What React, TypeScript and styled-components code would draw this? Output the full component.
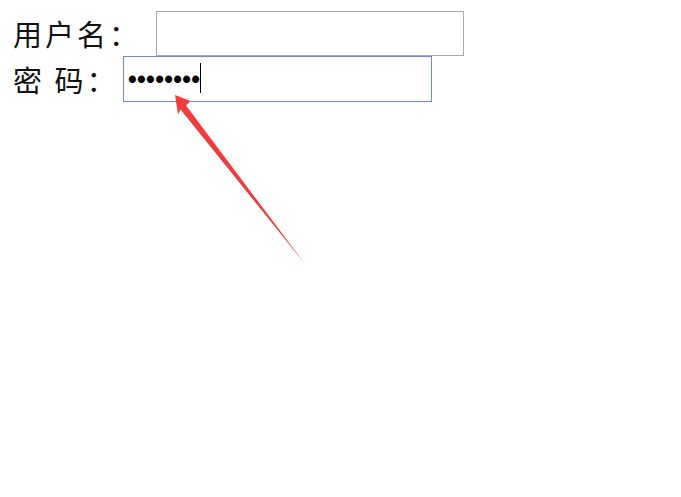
import React from 'react';
import styled, { createGlobalStyle } from 'styled-components';

const GlobalStyle = createGlobalStyle`
  html, body {
    margin: 0;
    padding: 0;
    background: #ffffff;
  }
`;

export default function App() {
  return (
    <>
      <GlobalStyle />
      <Page>
        <LoginForm>
          <Row>
            <Label $width={143}>用户名：</Label>
            <Field>
              <TextInput type="text" $width={308} $height={45} />
            </Field>
          </Row>
          <Row>
            <Label $width={110}>密&nbsp;码：</Label>
            <Field>
              <TextInput
                type="password"
                defaultValue="12345678"
                $width={309}
                $height={46}
                $active
              />
              <Caret />
            </Field>
          </Row>
        </LoginForm>
        <Arrow width="681" height="497" viewBox="0 0 681 497">
          <polygon
            points="175,95 190.5,101 186,105.5 305,264 180.5,109.5 178,114.5"
            fill="#f03c3c"
          />
        </Arrow>
      </Page>
    </>
  );
}

const Page = styled.div`
  position: relative;
  width: 681px;
  height: 497px;
  overflow: hidden;
  background: #ffffff;
`;

const LoginForm = styled.form`
  display: flex;
  flex-direction: column;
  padding: 11px 0 0 13px;
`;

const Row = styled.div`
  display: flex;
  align-items: center;
`;

const Label = styled.span<{ $width: number }>`
  width: ${(p) => p.$width}px;
  flex-shrink: 0;
  font-family: 'Noto Sans CJK SC', 'Noto Sans', sans-serif;
  font-size: 29px;
  letter-spacing: 3px;
  line-height: 1;
  color: #111111;
  white-space: pre;
`;

const Field = styled.div`
  position: relative;
  display: flex;
`;

const TextInput = styled.input<{ $width: number; $height: number; $active?: boolean }>`
  box-sizing: border-box;
  width: ${(p) => p.$width}px;
  height: ${(p) => p.$height}px;
  margin: 0;
  padding: 0 4px;
  border: 1px solid ${(p) => (p.$active ? '#6a8cd8' : '#a7a7a7')};
  border-radius: 0;
  background: #ffffff;
  outline: none;
  font-family: 'Liberation Sans', Arial, sans-serif;
  font-size: 25px;
  font-weight: bold;
  letter-spacing: 0.3px;
  color: #000000;
`;

const Caret = styled.span`
  position: absolute;
  left: 77px;
  top: 7px;
  width: 1px;
  height: 30px;
  background: #000000;
`;

const Arrow = styled.svg`
  position: absolute;
  top: 0;
  left: 0;
  pointer-events: none;
`;
